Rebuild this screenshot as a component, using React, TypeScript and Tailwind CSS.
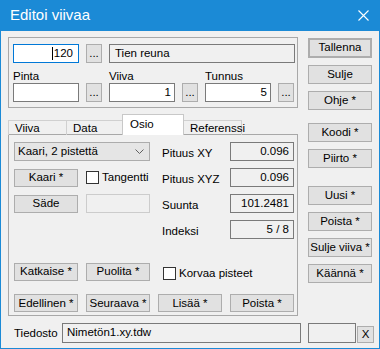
import React from 'react';

const Btn = ({ label, className = '' }: { label: string; className?: string }) => (
  <div className={`flex items-center justify-center whitespace-nowrap bg-[#e1e1e1] border border-[#adadad] leading-none ${className}`}>
    {label}
  </div>
);

const Dots = () => (
  <div className="w-[16px] h-[19px] flex items-end justify-center pb-[3px] bg-[#e1e1e1] border border-[#adadad] leading-none">
    ...
  </div>
);

const Field = ({ value = '', className = '' }: { value?: string; className?: string }) => (
  <div className={`h-[19px] flex items-center justify-end pr-[3px] bg-white border border-[#7a7a7a] ${className}`}>
    {value}
  </div>
);

const ReadOnly = ({ value }: { value: string }) => (
  <div className="w-[64px] h-[19px] flex items-center justify-end pr-[4px] bg-[#f0f0f0] border border-[#7a7a7a]">
    {value}
  </div>
);

const Check = ({ label }: { label: string }) => (
  <div className="flex items-center gap-[3px] whitespace-nowrap">
    <div className="w-[13px] h-[13px] bg-white border border-[#333333]" />
    <span>{label}</span>
  </div>
);

const App = () => {
  return (
    <div className="w-[380px] h-[349px] bg-[#1b8ad6] flex flex-col font-['Liberation_Sans',Arial,sans-serif] text-[11.5px] text-black">
      {/* otsikkopalkki */}
      <div className="h-[31px] flex items-center justify-between pl-[10px] pr-[11px] text-white text-[15px]">
        <span>Editoi viivaa</span>
        <svg width="11" height="11" viewBox="0 0 11 11">
          <path d="M0.5 0.5 L10.5 10.5 M10.5 0.5 L0.5 10.5" stroke="white" strokeWidth="1.1" />
        </svg>
      </div>

      <div className="flex-1 mx-px mb-px bg-[#f0f0f0] flex flex-col">
        <div className="flex pt-[6px] pl-[7px]">
          {/* vasen puoli */}
          <div className="w-[290px] flex flex-col">
            <div className="h-[71px] border border-[#a8a8a8] pt-[6px] pl-[4px]">
              <div className="flex gap-[7px] items-center">
                <div className="w-[66px] h-[19px] flex items-center justify-end pr-[5px] bg-white border border-[#0078d7]">
                  <span className="inline-block w-px h-[13px] bg-black mr-px" />
                  120
                </div>
                <Dots />
                <div className="w-[186px] h-[19px] flex items-center pl-[5px] bg-[#f0f0f0] border border-[#7a7a7a]">
                  Tien reuna
                </div>
              </div>
              <div className="flex gap-[7px] items-end mt-[6px]">
                <div className="flex flex-col">
                  <span className="h-[14px] leading-[14px]">Pinta</span>
                  <Field className="w-[66px]" />
                </div>
                <Dots />
                <div className="flex flex-col">
                  <span className="h-[14px] leading-[14px]">Viiva</span>
                  <Field value="1" className="w-[66px]" />
                </div>
                <Dots />
                <div className="flex flex-col">
                  <span className="h-[14px] leading-[14px]">Tunnus</span>
                  <Field value="5" className="w-[66px]" />
                </div>
                <Dots />
              </div>
            </div>

            {/* välilehdet */}
            <div className="flex items-end h-[21px] mt-[6px] relative z-10">
              <div className="w-[58px] h-[15px] border-t border-l border-[#d0d0d0] pl-[6px] leading-[14px]">Viiva</div>
              <div className="w-[56px] h-[15px] border-t border-l border-[#d0d0d0] pl-[6px] leading-[14px]">Data</div>
              <div className="w-[62px] h-[21px] border-t border-x border-[#c8c8c8] bg-white pl-[7px] leading-[18px]">Osio</div>
              <div className="w-[58px] h-[15px] border-t border-r border-[#d0d0d0] pl-[6px] leading-[14px]">Referenssi</div>
            </div>

            <div className="h-[182px] -mt-px border border-[#a8a8a8] pt-[7px] pl-[5px] flex flex-col">
              <div className="flex">
                <div className="w-[136px] flex flex-col">
                  <div className="h-[19px] flex items-center justify-between pl-[3px] pr-[5px] bg-[#e5e5e5] border border-[#acacac]">
                    <span>Kaari, 2 pistettä</span>
                    <svg width="9" height="5" viewBox="0 0 9 5">
                      <path d="M0.5 0.5 L4.5 4.5 L8.5 0.5" stroke="#606060" fill="none" />
                    </svg>
                  </div>
                  <div className="flex items-center gap-[8px] mt-[7px] h-[19px]">
                    <Btn label="Kaari *" className="w-[64px] h-[18px]" />
                    <Check label="Tangentti" />
                  </div>
                  <div className="flex items-center gap-[8px] mt-[7px] h-[19px]">
                    <Btn label="Säde" className="w-[64px] h-[18px]" />
                    <div className="w-[64px] h-[19px] bg-[#f0f0f0] border border-[#cccccc]" />
                  </div>
                </div>
                <div className="ml-[12px] flex flex-col gap-[7px]">
                  {[
                    ['Pituus XY', '0.096'],
                    ['Pituus XYZ', '0.096'],
                    ['Suunta', '101.2481'],
                    ['Indeksi', '5 / 8'],
                  ].map(([l, v]) => (
                    <div key={l} className="flex items-center h-[19px]">
                      <span className="w-[68px] pt-[4px]">{l}</span>
                      <ReadOnly value={v} />
                    </div>
                  ))}
                </div>
              </div>

              <div className="flex items-center gap-[8px] mt-[22px]">
                <Btn label="Katkaise *" className="w-[64px] h-[18px]" />
                <Btn label="Puolita *" className="w-[64px] h-[18px]" />
                <div className="ml-[5px] mt-[4px]">
                  <Check label="Korvaa pisteet" />
                </div>
              </div>
              <div className="flex items-center gap-[8px] mt-[12px]">
                <Btn label="Edellinen *" className="w-[64px] h-[18px]" />
                <Btn label="Seuraava *" className="w-[64px] h-[18px]" />
                <Btn label="Lisää *" className="w-[64px] h-[18px]" />
                <Btn label="Poista *" className="w-[64px] h-[18px]" />
              </div>
            </div>
          </div>

          {/* oikea painikesarake */}
          <div className="ml-[10px] w-[64px] flex flex-col">
            <Btn label="Tallenna" className="h-[20px] mt-px border-2 border-[#0078d7]" />
            <Btn label="Sulje" className="h-[19px] mt-[7px]" />
            <Btn label="Ohje *" className="h-[19px] mt-[7px]" />
            <Btn label="Koodi *" className="h-[19px] mt-[13px]" />
            <Btn label="Piirto *" className="h-[19px] mt-[7px]" />
            <Btn label="Uusi *" className="h-[19px] mt-[18px]" />
            <Btn label="Poista *" className="h-[19px] mt-[7px]" />
            <Btn label="Sulje viiva *" className="h-[19px] mt-[7px]" />
            <Btn label="Käännä *" className="h-[19px] mt-[7px]" />
          </div>
        </div>

        {/* tiedostorivi */}
        <div className="flex items-end mt-[7px] pl-[7px]">
          <span className="w-[54px] pl-[6px] pb-px">Tiedosto</span>
          <div className="w-[239px] h-[20px] flex items-center pl-[4px] bg-[#f0f0f0] border border-[#7a7a7a]">
            Nimetön1.xy.tdw
          </div>
          <div className="w-[48px] h-[20px] ml-[7px] bg-[#f0f0f0] border border-[#7a7a7a]" />
          <Btn label="X" className="w-[17px] h-[17px] ml-px" />
        </div>
      </div>
    </div>
  );
};

export default App;
